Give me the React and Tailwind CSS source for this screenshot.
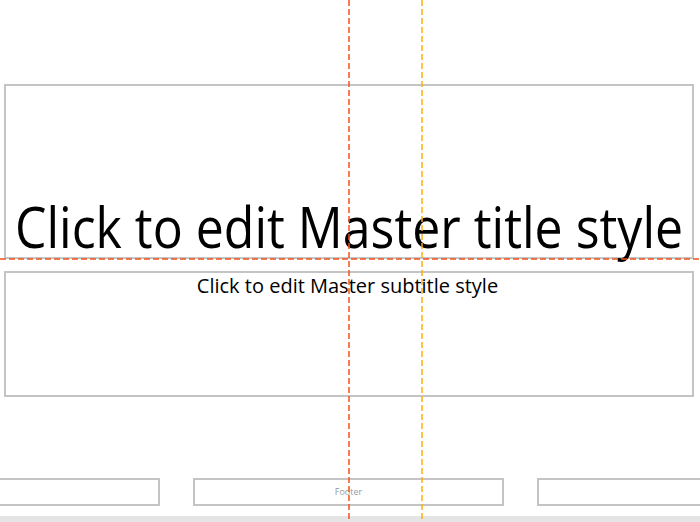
export default function App() {
  return (
    <div className="relative w-[700px] h-[522px] bg-white overflow-hidden font-['Open_Sans','Noto_Sans',sans-serif]">
      <div className="flex flex-col h-full pt-[84px]">
        <div className="mx-[4px] w-[690px] h-[175px] border-2 border-[#c4c4c4] flex items-end justify-center pb-[2px]">
          <h1 className="text-[50px] leading-none text-black whitespace-nowrap origin-bottom scale-y-[1.15]">
            Click to edit Master title style
          </h1>
        </div>
        <div className="mt-[12px] mx-[4px] w-[690px] h-[126px] border-2 border-[#c4c4c4] flex justify-center">
          <p className="text-[20px] leading-[26px] text-black -ml-[3px]">Click to edit Master subtitle style</p>
        </div>
        <div className="mt-[81px] flex h-[28px]">
          <div className="shrink-0 w-[162px] -ml-[2px] border-2 border-[#c4c4c4]"></div>
          <div className="shrink-0 ml-[33px] w-[311px] border-2 border-[#c4c4c4] flex items-center justify-center">
            <span className="text-[9px] text-[#9a9a9a]">Footer</span>
          </div>
          <div className="shrink-0 ml-[33px] w-[170px] border-2 border-[#c4c4c4]"></div>
        </div>
        <div className="mt-auto h-[6px] bg-[#e4e4e4]"></div>
      </div>
      <svg className="absolute inset-0 pointer-events-none" width="700" height="522">
        <line x1="0" y1="259" x2="700" y2="259" stroke="#f4511e" strokeWidth="1.5" strokeDasharray="6 3" />
        <line x1="349" y1="0" x2="349" y2="522" stroke="#f4511e" strokeWidth="1.5" strokeDasharray="6 3" />
        <line x1="422" y1="0" x2="422" y2="522" stroke="#ffad0f" strokeWidth="1.5" strokeDasharray="6 3" />
      </svg>
    </div>
  );
}
